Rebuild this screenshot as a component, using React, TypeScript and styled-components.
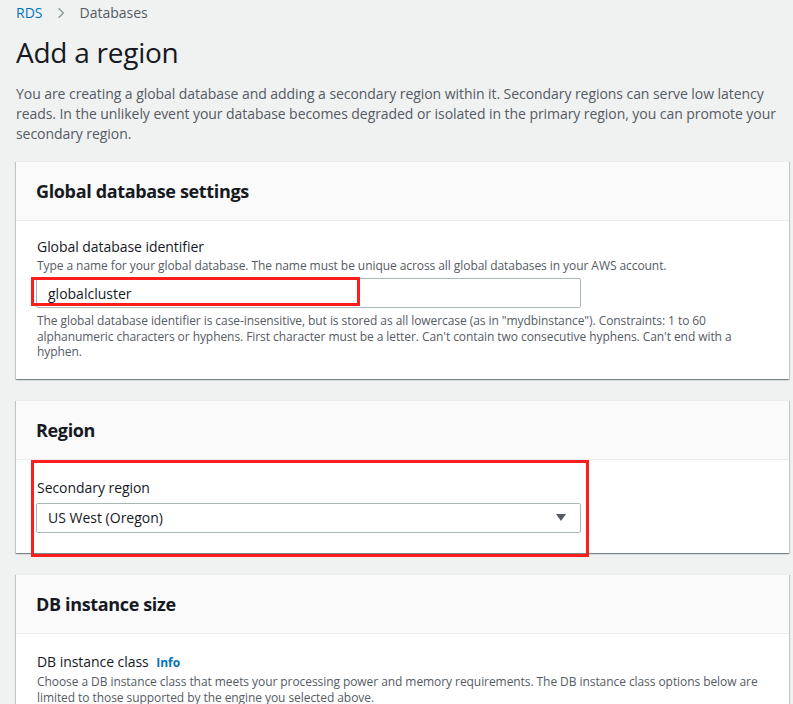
import styled, { createGlobalStyle } from "styled-components"

// TOKENS //
const FONT = `"Open Sans", "Noto Sans", "Liberation Sans", sans-serif`
const TEXT = "#16191f"
const MUTED = "#545b64"
const LINK = "#0073bb"
const RED = "#fd1d1d"

/////////////////////////////////////////////////////////////////////////////

const App = () => {
  return (
    <>
      <GlobalStyle />
      <Page>
        <Breadcrumbs>
          <Crumb href="#">RDS</Crumb>
          <Chevron viewBox="0 0 10 16" aria-hidden>
            <path d="M2 2l6 6-6 6" fill="none" stroke="#879596" strokeWidth="1.6" />
          </Chevron>
          <CurrentCrumb>Databases</CurrentCrumb>
        </Breadcrumbs>

        <Title>Add a region</Title>
        <Intro>
          You are creating a global database and adding a secondary region within it. Secondary
          regions can serve low latency reads. In the unlikely event your database becomes degraded
          or isolated in the primary region, you can promote your secondary region.
        </Intro>

        <Stack>
          <Card>
            <CardHeader>Global database settings</CardHeader>
            <CardBody $top={15} $bottom={19}>
              <Label>Global database identifier</Label>
              <Description>
                Type a name for your global database. The name must be unique across all global
                databases in your AWS account.
              </Description>
              <FieldWrap>
                <TextInput readOnly value="globalcluster" />
                <Highlight $left={-5} $top={-1} $width={329} $height={29} />
              </FieldWrap>
              <Hint>
                The global database identifier is case-insensitive, but is stored as all lowercase
                (as in "mydbinstance"). Constraints: 1 to 60 alphanumeric characters or hyphens.
                First character must be a letter. Can't contain two consecutive hyphens. Can't end
                with a hyphen.
              </Hint>
            </CardBody>
          </Card>

          <Card>
            <CardHeader>Region</CardHeader>
            <CardBody $top={17} $bottom={20}>
              <Label>Secondary region</Label>
              <Select>
                <span>US West (Oregon)</span>
                <Caret viewBox="0 0 10 7" aria-hidden>
                  <path d="M0 0h10L5 7z" fill={MUTED} />
                </Caret>
              </Select>
            </CardBody>
            <Highlight $left={15} $top={59} $width={558} $height={97} />
          </Card>

          <Card>
            <CardHeader>DB instance size</CardHeader>
            <CardBody $top={17}>
              <Label>
                DB instance class <InfoLink href="#">Info</InfoLink>
              </Label>
              <Description>
                Choose a DB instance class that meets your processing power and memory
                requirements. The DB instance class options below are limited to those supported by
                the engine you selected above.
              </Description>
            </CardBody>
          </Card>
        </Stack>
      </Page>
    </>
  )
}

/////////////////////////////////////////////////////////////////////////////

const GlobalStyle = createGlobalStyle`
  html, body {
    margin: 0;
    background: #f0f1f1;
    font-family: ${FONT};
    color: ${TEXT};
    -webkit-font-smoothing: antialiased;
  }
`

const Page = styled.main`
  padding: 3px 4px 40px 16px;
`

const Breadcrumbs = styled.nav`
  display: flex;
  align-items: center;
  height: 20px;
  font-size: 14px;
  line-height: 20px;
`

const Crumb = styled.a`
  color: ${LINK};
  text-decoration: none;
`

const Chevron = styled.svg`
  width: 8px;
  height: 14px;
  margin: 0 14px 0 15px;
`

const CurrentCrumb = styled.span`
  color: ${MUTED};
`

const Title = styled.h1`
  margin: 11px 0 14px;
  font-size: 28px;
  line-height: 36px;
  font-weight: 400;
  letter-spacing: -0.25px;
  color: ${TEXT};
`

const Intro = styled.p`
  margin: 0 0 17px 0;
  font-size: 14px;
  line-height: 20px;
  letter-spacing: -0.06px;
  color: ${MUTED};
`

const Stack = styled.div`
  display: flex;
  flex-direction: column;
  gap: 21px;
`

const Card = styled.section`
  position: relative;
  background: #fff;
  border-top: 1px solid #eaeded;
  box-shadow: 0 1px 1px 0 rgba(0, 28, 36, 0.3), 1px 1px 1px 0 rgba(0, 28, 36, 0.15),
    -1px 1px 1px 0 rgba(0, 28, 36, 0.15);
`

const CardHeader = styled.h2`
  margin: 0;
  padding: 16px 20px;
  background: #fafafa;
  border-bottom: 1px solid #eaeded;
  font-size: 18px;
  line-height: 26px;
  font-weight: 700;
  letter-spacing: -0.35px;
  color: ${TEXT};
`

const CardBody = styled.div<{ $top?: number; $bottom?: number }>`
  padding: ${({ $top = 15 }) => $top}px 20px ${({ $bottom = 20 }) => $bottom}px 21px;
`

const Label = styled.div`
  font-size: 14px;
  line-height: 22px;
  letter-spacing: -0.05px;
  color: ${TEXT};
`

const InfoLink = styled.a`
  margin-left: 4px;
  color: ${LINK};
  font-size: 12px;
  font-weight: 700;
  text-decoration: none;
`

const Description = styled.div`
  font-size: 12px;
  line-height: 16px;
  letter-spacing: -0.07px;
  color: ${MUTED};
`

const FieldWrap = styled.div`
  position: relative;
  width: 545px;
  margin: 4px 0 0 -1px;
`

const TextInput = styled.input`
  box-sizing: border-box;
  display: block;
  width: 100%;
  height: 30px;
  padding: 0 11px;
  border: 1px solid #aab7b8;
  border-radius: 2px;
  font-family: ${FONT};
  font-size: 14px;
  color: ${TEXT};
  background: #fff;
  outline: none;
`

const Hint = styled.p`
  margin: 5px 0 0;
  font-size: 12px;
  line-height: 15.5px;
  letter-spacing: -0.07px;
  color: ${MUTED};
`

const Select = styled.div`
  box-sizing: border-box;
  display: flex;
  align-items: center;
  justify-content: space-between;
  width: 545px;
  height: 30px;
  margin: 4px 0 0 -1px;
  padding: 0 14px 0 11px;
  border: 1px solid #aab7b8;
  border-radius: 2px;
  font-size: 14px;
  color: ${TEXT};
`

const Caret = styled.svg`
  width: 10px;
  height: 7px;
`

const Highlight = styled.div<{ $left: number; $top: number; $width: number; $height: number }>`
  position: absolute;
  left: ${({ $left }) => $left}px;
  top: ${({ $top }) => $top}px;
  width: ${({ $width }) => $width}px;
  height: ${({ $height }) => $height}px;
  box-sizing: border-box;
  border: 3px solid ${RED};
  pointer-events: none;
  z-index: 2;
`

export default App
